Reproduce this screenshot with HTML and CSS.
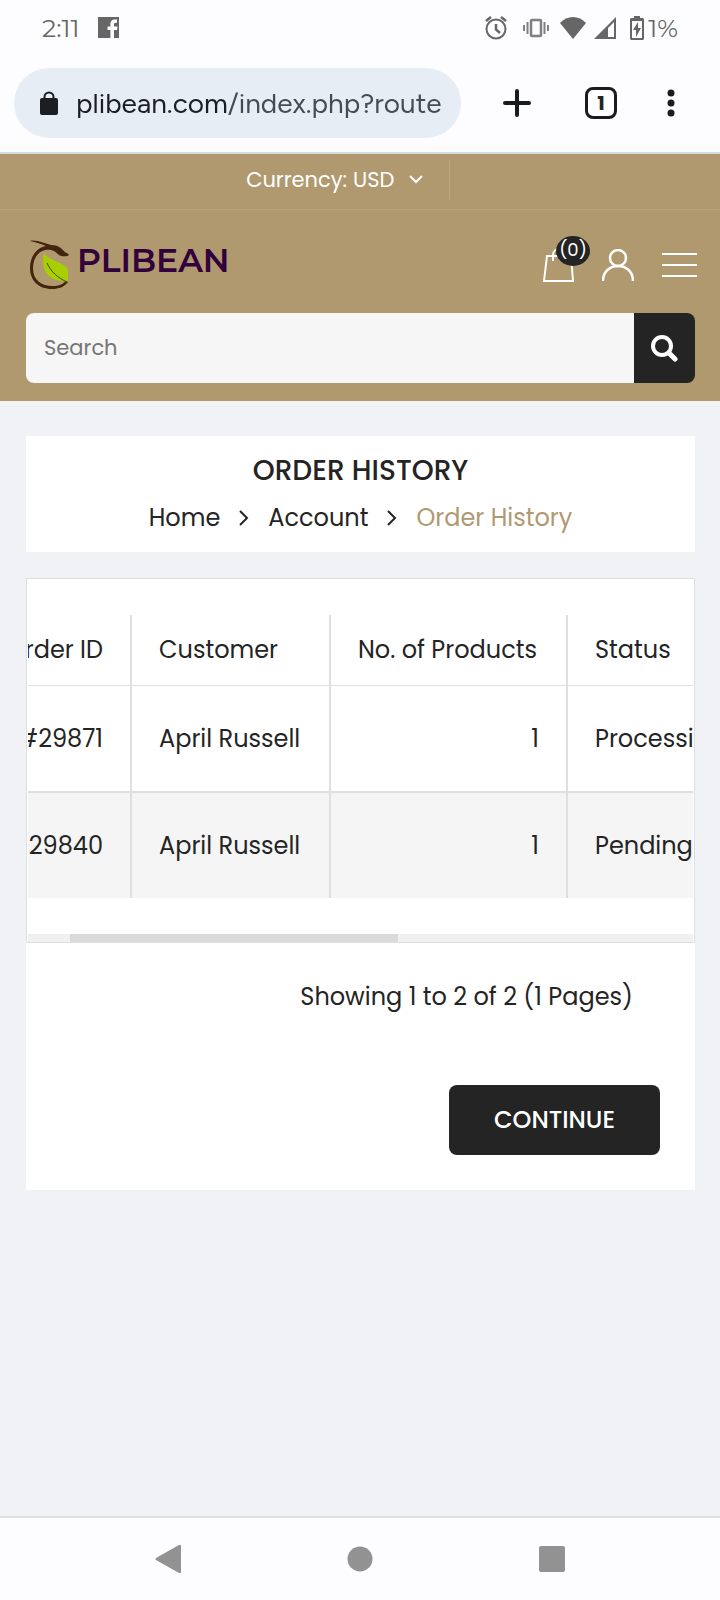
FILE: index.html
```html
<!DOCTYPE html>
<html lang="en">
<head>
  <meta charset="UTF-8">
  <meta name="viewport" content="width=device-width, initial-scale=1.0">
  <title>Order History</title>
  <link rel="stylesheet" href="styles.css">
</head>
<body>
  <div class="status-bar">
    <div class="status-left">
      <span>2:11</span>
      <svg width="22" height="22" viewBox="0 0 22 22">
        <path fill="#666" d="M0 0h21v21h-5v-8h3l.5-3.500H16V7.500c0-1 .4-1.700 1.700-1.700H19V2.600c-.5 0-1.300-.1-2.300-.1-2.800 0-4.300 1.600-4.300 4.300v2.700H9.500V13h2.900v8H0z"/>
      </svg>
    </div>
    <div class="status-right">
      <svg class="icon-alarm" width="22" height="24" viewBox="0 0 22 24" fill="none" stroke="#666" stroke-width="2">
        <circle cx="11" cy="13" r="9.500"/>
        <path d="M11 8v5.500l4 3.500M1 5l5-4M21 5l-5-4" stroke-width="2.500"/>
      </svg>
      <svg class="icon-vibrate" width="26" height="20" viewBox="0 0 26 20" fill="none" stroke="#808080" stroke-width="2">
        <rect x="8" y="2" width="10" height="16" rx="1" stroke-width="2.500"/>
        <path d="M4.500 4v12M1 7v6M21.500 4v12M25 7v6"/>
      </svg>
      <svg class="icon-wifi" width="26" height="22" viewBox="0 0 26 22">
        <path fill="#666" d="M13 22L0 6C7-2 19-2 26 6z"/>
      </svg>
      <svg class="icon-signal" width="22" height="22" viewBox="0 0 22 22">
        <path fill="#666" d="M22 0v22H0zM20 5l-6 6v9h6z" fill-rule="evenodd"/>
      </svg>
      <svg width="14" height="24" viewBox="0 0 14 24">
        <path fill="#666" fill-rule="evenodd" d="M4 0h6v2h3l1 1v20l-1 1H1l-1-1V3l1-1h3zM2 5v17h10V5zM8 6v6h3l-5 9v-7H3z"/>
      </svg>
      <span>1%</span>
    </div>
  </div>

  <div class="browser-bar">
    <label class="address">
      <svg width="18" height="24" viewBox="0 0 18 24">
        <rect y="7" width="18" height="17" rx="2" fill="#1b1e22"/>
        <path d="M4.500 8V6a4.500 4.500 0 0 1 9 0v2" fill="none" stroke="#1b1e22" stroke-width="2"/>
      </svg>
      <input type="text" class="address-input" aria-label="Address" value="plibean.com/index.php?route">
    </label>
    <button class="browser-btn" aria-label="New tab">
      <svg width="28" height="28" viewBox="0 0 28 28" stroke="#191b1e" stroke-width="4" stroke-linecap="round">
        <path d="M14 2v24M2 14h24"/>
      </svg>
    </button>
    <button class="tab-count" aria-label="Tabs">1</button>
    <button class="browser-btn" aria-label="Menu">
      <svg width="8" height="28" viewBox="0 0 8 28" fill="#191b1e">
        <circle cx="4" cy="4" r="3.500"/>
        <circle cx="4" cy="14" r="3.500"/>
        <circle cx="4" cy="24" r="3.500"/>
      </svg>
    </button>
  </div>

  <header>
    <div class="top-bar">
      <div class="currency">
        <label for="currency">Currency:</label>
        <select id="currency">
          <option>USD</option>
        </select>
        <svg width="14" height="10" viewBox="0 0 14 10" fill="none" stroke="#fff" stroke-width="2">
          <path d="M1 1l6 6 6-6"/>
        </svg>
      </div>
    </div>

    <div class="header-main">
      <a href="#" class="logo">
        <svg width="40" height="50" viewBox="0 0 40 50">
          <path fill="#43240e" d="M0 1c3-1 5 0 8 0l13 4c7 0 10 3 13 6 1 2 4 2 5 4-2 2-5 1-8 1-3-1-5-5-10-6C10 8 3 17 3 28c0 12 8 18 20 18 6 0 10-2 13-5l2 1c-4 5-9 7-16 7C8 49 0 40 0 28 0 17 6 8 16 6 11 4 6 2 0 1z"/>
          <path fill="#a9cf00" d="M14 13c4 8 24 10 24 18v10C27 42 9 38 14 13z"/>
          <path fill="none" stroke="#3d4a0a" d="M17 23c4 9 11 15 20 19"/>
        </svg>
        <span>PLIBEAN</span>
      </a>
      <div class="header-icons">
        <a href="#" class="cart" aria-label="Cart">
          <svg width="32" height="36" viewBox="0 0 32 36" fill="none" stroke="#fff" stroke-width="2">
            <path d="M4 9h24l2 25H1z"/>
            <path d="M10 14V8c0-8 12-8 12 0v6"/>
          </svg>
          <span class="cart-count">(0)</span>
        </a>
        <a href="#" class="user" aria-label="My Account">
          <svg width="32" height="32" viewBox="0 0 32 32" fill="none" stroke="#fff" stroke-width="2.500">
            <circle cx="16" cy="9" r="8"/>
            <path d="M1 32c0-20 30-20 30 0"/>
          </svg>
        </a>
        <button class="menu-btn" aria-label="Open menu">
          <span></span><span></span><span></span>
        </button>
      </div>
    </div>

    <form class="search">
      <input type="text" placeholder="Search" aria-label="Search">
      <button type="submit" aria-label="Search">
        <svg width="28" height="28" viewBox="0 0 28 28" fill="none" stroke="#fff" stroke-width="4">
          <circle cx="11" cy="12" r="9"/>
          <path d="M18 19l6 6" stroke-width="5" stroke-linecap="round"/>
        </svg>
      </button>
    </form>
  </header>

  <main>
    <section class="page-title">
      <h1>ORDER HISTORY</h1>
      <nav class="breadcrumb">
        <a href="#">Home</a>
        <svg width="10" height="16" viewBox="0 0 10 16" fill="none" stroke="#242424" stroke-width="2"><path d="M1 1l7 7-7 7"/></svg>
        <a href="#">Account</a>
        <svg width="10" height="16" viewBox="0 0 10 16" fill="none" stroke="#242424" stroke-width="2"><path d="M1 1l7 7-7 7"/></svg>
        <a href="#" class="current">Order History</a>
      </nav>
    </section>

    <section class="orders">
      <div class="table-box">
        <div class="table-scroll" id="table-scroll">
          <table>
            <thead>
              <tr>
                <th class="col-id">Order ID</th>
                <th class="col-customer">Customer</th>
                <th class="col-products">No. of Products</th>
                <th class="col-status">Status</th>
                <th class="col-rest"></th>
              </tr>
            </thead>
            <tbody>
              <tr>
                <td class="col-id">#29871</td>
                <td>April Russell</td>
                <td class="col-products">1</td>
                <td>Processing</td>
                <td></td>
              </tr>
              <tr>
                <td class="col-id">#29840</td>
                <td>April Russell</td>
                <td class="col-products">1</td>
                <td>Pending</td>
                <td></td>
              </tr>
            </tbody>
          </table>
        </div>
        <div class="scroll-track"><div class="scroll-thumb" id="scroll-thumb"></div></div>
      </div>
      <p class="results">Showing 1 to 2 of 2 (1 Pages)</p>
      <div class="buttons">
        <a href="#" class="continue-btn">CONTINUE</a>
      </div>
    </section>
  </main>

  <div class="nav-bar">
    <button aria-label="Back">
      <svg width="26" height="28" viewBox="0 0 26 28"><path fill="#929292" d="M24 0q2-1 2 1v26q0 2-2 1L1 15q-1-1 0-2z"/></svg>
    </button>
    <button aria-label="Home">
      <svg width="26" height="26" viewBox="0 0 26 26"><circle cx="13" cy="13" r="12.500" fill="#929292"/></svg>
    </button>
    <button aria-label="Recent apps">
      <svg width="26" height="26" viewBox="0 0 26 26"><rect width="26" height="26" rx="2" fill="#929292"/></svg>
    </button>
  </div>

  <script>
    const box = document.getElementById('table-scroll');
    const thumb = document.getElementById('scroll-thumb');

    function updateThumb() {
      thumb.style.width = (box.clientWidth / box.scrollWidth * 100) + '%';
      thumb.style.marginLeft = (box.scrollLeft / box.scrollWidth * 100) + '%';
    }

    box.addEventListener('scroll', updateThumb);
    window.addEventListener('resize', updateThumb);
    box.scrollLeft = 84;
    updateThumb();
  </script>
</body>
</html>
```

FILE: styles.css
```css
* {
  box-sizing: border-box;
}

body {
  margin: 0;
  min-height: 100vh;
  display: flex;
  flex-direction: column;
  font-family: Poppins, Inter, sans-serif;
  font-size: 24px;
  line-height: 36px;
  color: #242424;
  background: #f0f2f6;
}

svg {
  display: block;
  flex-shrink: 0;
}

a {
  color: inherit;
  text-decoration: none;
}

button {
  border: none;
  background: none;
  padding: 0;
  color: inherit;
  font-family: inherit;
  cursor: pointer;
}

.status-bar {
  display: flex;
  justify-content: space-between;
  align-items: center;
  height: 56px;
  padding: 0 42px;
  background: #fdfdff;
  color: #666;
  font-family: Montserrat, Poppins, Inter, sans-serif;
  font-size: 25px;
}

.status-left,
.status-right {
  display: flex;
  align-items: center;
}

.status-left {
  gap: 18px;
}

.status-right {
  gap: 4px;
}

.icon-alarm {
  margin-right: 12px;
}

.icon-vibrate {
  margin-right: 7px;
}

.icon-wifi {
  margin-right: 4px;
}

.icon-signal {
  margin-right: 10px;
}

.browser-bar {
  display: flex;
  align-items: center;
  padding: 12px 45px 14px 14px;
  background: #fdfdff;
  border-bottom: 2px solid #d5dce2;
}

.address {
  display: flex;
  flex: 1;
  align-items: center;
  gap: 18px;
  height: 70px;
  margin-right: 42px;
  padding: 0 12px 0 26px;
  border-radius: 35px;
  background: #e6edf5;
}

.address-input {
  width: 100%;
  min-width: 0;
  padding: 0;
  border: none;
  outline: none;
  font-family: Figtree, Outfit, Inter, sans-serif;
  font-size: 28px;
  color: transparent;
  background: linear-gradient(90deg, #1b1e22 151px, #444b52 151px);
  -webkit-background-clip: text;
  background-clip: text;
}

.tab-count {
  width: 32px;
  height: 32px;
  margin: 0 50px 0 54px;
  border: 3px solid #191b1e;
  border-radius: 8px;
  font-size: 20px;
  font-weight: 700;
  line-height: 26px;
}

header {
  background: #b0996f;
  color: #fff;
}

.top-bar {
  display: flex;
  padding: 6px 0 9px;
  border-bottom: 1px solid #bca67e;
}

.currency {
  display: flex;
  justify-content: flex-end;
  align-items: baseline;
  width: 450px;
  padding-right: 26px;
  border-right: 1px solid #bca67e;
  font-size: 21px;
  line-height: 40px;
}

.currency select {
  appearance: none;
  margin: 0 14px 0 6px;
  padding: 0;
  border: none;
  background: none;
  color: #fff;
  font-family: inherit;
  font-size: 21px;
}

.currency svg {
  align-self: center;
}

.header-main {
  display: flex;
  justify-content: space-between;
  align-items: center;
  height: 103px;
  padding: 7px 23px 0 30px;
}

.logo {
  display: flex;
  gap: 7px;
}

.logo span {
  color: #32003a;
  font-family: Montserrat, Inter, sans-serif;
  font-size: 33px;
  font-weight: 600;
  line-height: 40px;
}

.header-icons {
  display: flex;
  align-items: center;
}

.cart {
  position: relative;
  margin-right: 27px;
}

.cart-count {
  position: absolute;
  top: -11px;
  left: 13px;
  width: 34px;
  height: 30px;
  border-radius: 50%;
  background: #242424;
  font-size: 18px;
  line-height: 28px;
  text-align: center;
}

.user {
  margin-right: 28px;
}

.menu-btn {
  display: flex;
  flex-direction: column;
  gap: 9px;
  width: 35px;
}

.menu-btn span {
  width: 100%;
  height: 2px;
  background: #fff;
}

.search {
  display: flex;
  margin: 0;
  padding: 0 25px 18px 26px;
}

.search input {
  flex: 1;
  min-width: 0;
  height: 70px;
  padding: 0 18px 2px;
  border: none;
  border-radius: 8px 0 0 8px;
  background: #f6f6f6;
  font-family: inherit;
  font-size: 21px;
}

.search button {
  display: grid;
  place-items: center;
  width: 61px;
  border-radius: 0 8px 8px 0;
  background: #242424;
}

main {
  flex: 1;
  padding: 35px 25px 35px 26px;
}

.page-title {
  margin-bottom: 26px;
  padding: 17px 0 16px;
  background: #fff;
  text-align: center;
}

.page-title h1 {
  margin: 0 0 11px;
  font-size: 28px;
  font-weight: 500;
  line-height: 36px;
}

.breadcrumb {
  display: flex;
  justify-content: center;
  align-items: center;
  gap: 19px;
}

.current {
  color: #b0996f;
}

.orders {
  background: #fff;
}

.table-box {
  padding: 0 1px;
  border: 1px solid #dfdfdf;
}

.table-scroll {
  padding: 36px 0;
  overflow-x: auto;
  scrollbar-width: none;
}

table {
  width: 1346px;
  table-layout: fixed;
  border-collapse: separate;
  border-spacing: 0;
}

th,
td {
  height: 107px;
  padding: 0 27px;
  border-right: 2px solid #dfdfdf;
  border-bottom: 2px solid #dfdfdf;
  font-weight: 400;
  text-align: left;
  white-space: nowrap;
}

th {
  height: 71px;
  border-bottom-width: 1px;
}

tbody tr:last-child td {
  height: 105px;
  border-bottom: none;
  background: #f5f5f5;
}

.col-id {
  width: 188px;
  text-align: right;
}

.col-customer {
  width: 199px;
}

.col-products {
  width: 237px;
  text-align: right;
}

th.col-products {
  text-align: left;
}

.col-status {
  width: 188px;
}

.scroll-track {
  background: #f0f0f0;
}

.scroll-thumb {
  height: 8px;
  background: #dadada;
}

.results {
  margin: 0;
  padding: 36px 62px 0;
  text-align: right;
}

.buttons {
  display: flex;
  justify-content: flex-end;
  padding: 70px 35px 35px;
}

.continue-btn {
  padding: 17px 45px;
  border-radius: 8px;
  background: #242424;
  color: #fff;
  font-weight: 500;
}

.nav-bar {
  display: flex;
  justify-content: space-around;
  align-items: center;
  height: 84px;
  padding: 0 72px;
  border-top: 2px solid #dfe0e2;
  background: #fdfdff;
}
```
